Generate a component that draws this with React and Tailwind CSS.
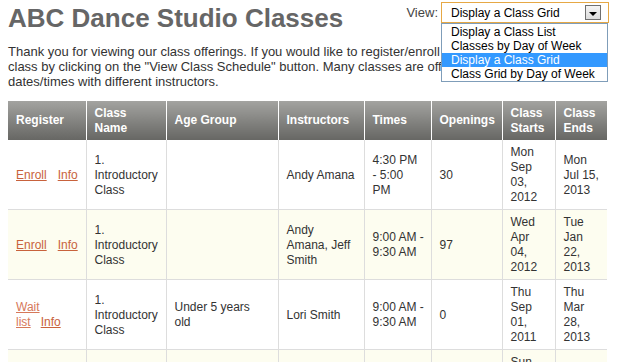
import React from 'react';

const columns = [
  { label: 'Register', width: 78 },
  { label: 'Class Name', width: 80 },
  { label: 'Age Group', width: 112 },
  { label: 'Instructors', width: 86 },
  { label: 'Times', width: 67 },
  { label: 'Openings', width: 71 },
  { label: 'Class Starts', width: 53 },
  { label: 'Class Ends', width: 52 },
];

const classes = [
  {
    id: 1,
    waitlist: false,
    name: '1.\nIntroductory\nClass',
    age: '',
    instructors: 'Andy Amana',
    times: '4:30 PM\n- 5:00\nPM',
    openings: '30',
    starts: 'Mon\nSep\n03,\n2012',
    ends: 'Mon\nJul 15,\n2013',
  },
  {
    id: 2,
    waitlist: false,
    name: '1.\nIntroductory\nClass',
    age: '',
    instructors: 'Andy\nAmana, Jeff\nSmith',
    times: '9:00 AM -\n9:30 AM',
    openings: '97',
    starts: 'Wed\nApr\n04,\n2012',
    ends: 'Tue\nJan\n22,\n2013',
  },
  {
    id: 3,
    waitlist: true,
    name: '1.\nIntroductory\nClass',
    age: 'Under 5 years\nold',
    instructors: 'Lori Smith',
    times: '9:00 AM -\n9:30 AM',
    openings: '0',
    starts: 'Thu\nSep\n01,\n2011',
    ends: 'Thu\nMar\n28,\n2013',
  },
  {
    id: 4,
    waitlist: false,
    name: '1.\nIntroductory\nClass',
    age: '',
    instructors: 'Andy Amana',
    times: '4:30 PM\n- 5:00\nPM',
    openings: '28',
    starts: 'Sun\nSep\n02,\n2012',
    ends: 'Sun\nJul 14,\n2013',
  },
];

const views = [
  'Display a Class List',
  'Classes by Day of Week',
  'Display a Class Grid',
  'Class Grid by Day of Week',
];

function ViewPicker() {
  return (
    <div className="flex items-center mt-[2px] mr-[2px]">
      <span className="text-[13px] text-[#444] mr-[3px]">View:</span>
      <div className="relative">
        <div className="w-[168px] h-[21px] border border-[#e6a845] bg-white flex items-center justify-between pl-[9px] pr-[7px]">
          <span className="text-[12px] text-black">Display a Class Grid</span>
          <span className="w-[16px] h-[15px] border border-[#6f6f6f] bg-gradient-to-b from-[#f4f4f4] to-[#dcdcdc] flex items-end justify-center pb-[3px]">
            <span className="w-0 h-0 border-l-[4px] border-r-[4px] border-t-[4px] border-l-transparent border-r-transparent border-t-black" />
          </span>
        </div>
        <ul className="absolute left-0 top-[21px] z-10 w-[167px] bg-white border border-[#7f9db9] pt-[1px]">
          {views.map((v) => (
            <li
              key={v}
              className={`h-[14px] leading-[14px] text-[12px] pl-[9px] ${
                v === 'Display a Class Grid' ? 'bg-[#3399ff] text-white' : 'text-black'
              }`}
            >
              {v}
            </li>
          ))}
        </ul>
      </div>
    </div>
  );
}

function RegisterLinks({ waitlist }) {
  return (
    <span className="whitespace-nowrap">
      {waitlist ? (
        <a href="#" className="text-[#d6785a] underline">
          Wait
          <br />
          list
        </a>
      ) : (
        <a href="#" className="text-[#c8623c] underline">
          Enroll
        </a>
      )}
      <a href="#" className={`${waitlist ? 'ml-[10px]' : 'ml-[11px]'} text-[#c8623c] underline`}>
        Info
      </a>
    </span>
  );
}

export default function App() {
  return (
    <div className="px-2 bg-white font-['Liberation_Sans',Arial,sans-serif] min-h-[362px]">
      <div className="flex justify-between items-start">
        <h1 className="mt-[3px] text-[26px] leading-[30px] font-bold text-[#666]">
          ABC Dance Studio Classes
        </h1>
        <ViewPicker />
      </div>

      <p className="mt-[11px] w-[599px] text-[13px] leading-[15px] text-[#333]">
        Thank you for viewing our class offerings. If you would like to register/enroll in a class, please select a
        <br />
        class by clicking on the "View Class Schedule" button. Many classes are offered at multiple
        <br />
        dates/times with different instructors.
      </p>

      {/* Class grid */}
      <table className="mt-[12px] w-[599px] table-fixed border-collapse text-[12px] leading-[15px] text-[#333]">
        <colgroup>
          {columns.map((c) => (
            <col key={c.label} style={{ width: c.width }} />
          ))}
        </colgroup>
        <thead>
          <tr>
            {columns.map((c, i) => (
              <th
                key={c.label}
                className={`h-[39px] px-2 text-left align-middle font-bold text-white bg-gradient-to-b from-[#a3a3a0] to-[#676764] ${
                  i > 0 ? 'border-l border-white' : ''
                }`}
              >
                {c.label}
              </th>
            ))}
          </tr>
        </thead>
        <tbody>
          {classes.map((row, idx) => (
            <tr key={row.id} className={`border-b border-[#dddddd] ${idx % 2 === 1 ? 'bg-[#fdfdf0]' : 'bg-white'}`}>
              <td className="px-2 pt-[5px] pb-[4px] align-middle">
                <RegisterLinks waitlist={row.waitlist} />
              </td>
              <td className="border-l border-[#dddddd] px-2 pt-[5px] pb-[4px] align-middle whitespace-pre">{row.name}</td>
              <td className="border-l border-[#dddddd] px-2 pt-[5px] pb-[4px] align-middle whitespace-pre">{row.age}</td>
              <td className="border-l border-[#dddddd] px-2 pt-[5px] pb-[4px] align-middle whitespace-pre">{row.instructors}</td>
              <td className="border-l border-[#dddddd] px-2 pt-[5px] pb-[4px] align-middle whitespace-pre">{row.times}</td>
              <td className="border-l border-[#dddddd] px-2 pt-[5px] pb-[4px] align-middle">{row.openings}</td>
              <td className="border-l border-[#dddddd] px-2 pt-[5px] pb-[4px] align-middle whitespace-pre">{row.starts}</td>
              <td className="border-l border-[#dddddd] px-2 pt-[5px] pb-[4px] align-middle whitespace-pre">{row.ends}</td>
            </tr>
          ))}
        </tbody>
      </table>
    </div>
  );
}
